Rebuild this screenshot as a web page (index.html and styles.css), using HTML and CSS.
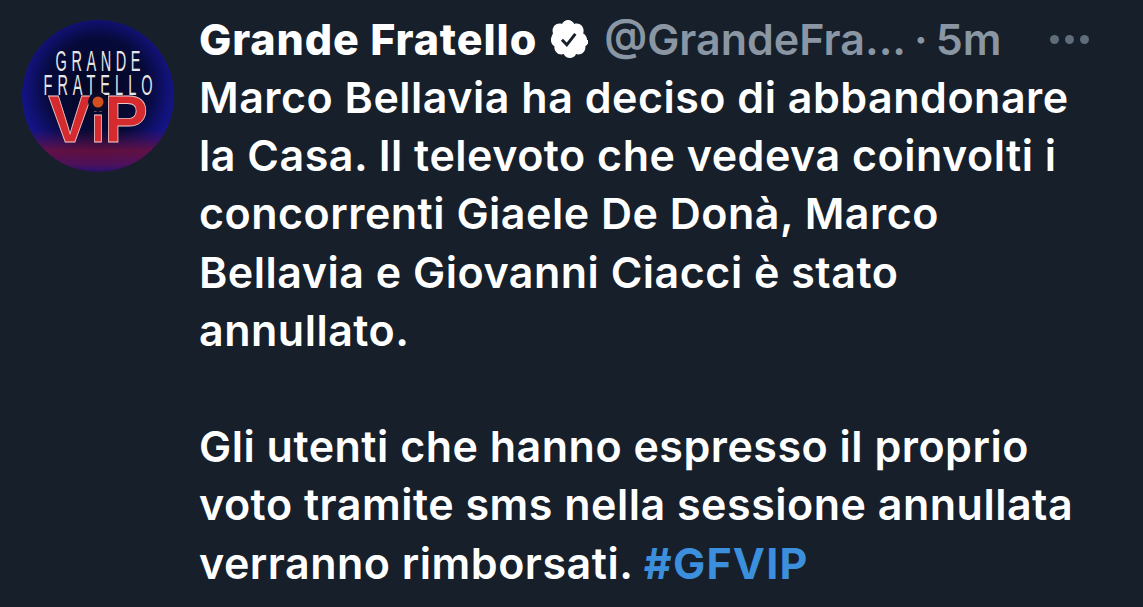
FILE: index.html
```html
<!DOCTYPE html>
<html lang="it">
<head>
<meta charset="utf-8">
<title>Grande Fratello</title>
<link rel="stylesheet" href="styles.css">
</head>
<body>
<article class="tweet">
  <div class="avatar">
    <svg viewBox="0 0 154 154" width="154" height="154">
      <defs>
        <radialGradient id="ball" cx="50%" cy="45%" r="55%">
          <stop offset="0" stop-color="#04061f"/>
          <stop offset="0.6" stop-color="#060a3a"/>
          <stop offset="0.86" stop-color="#12127a"/>
          <stop offset="0.97" stop-color="#15158c"/>
          <stop offset="1" stop-color="#14124f"/>
        </radialGradient>
        <linearGradient id="glow" x1="0" y1="0" x2="0" y2="1">
          <stop offset="0.72" stop-color="#5a0f40" stop-opacity="0"/>
          <stop offset="0.86" stop-color="#6e1038" stop-opacity="0.85"/>
          <stop offset="0.95" stop-color="#5c1050" stop-opacity="0.8"/>
          <stop offset="1" stop-color="#381060" stop-opacity="0.6"/>
        </linearGradient>
      </defs>
      <circle cx="76" cy="76" r="76" fill="url(#ball)"/>
      <circle cx="76" cy="76" r="76" fill="url(#glow)"/>
      <g transform="translate(76 0) scale(.5 1)">
        <text class="logo-line" x="0" y="51" textLength="170" lengthAdjust="spacing">GRANDE</text>
        <text class="logo-line" x="0" y="75" textLength="218" lengthAdjust="spacing">FRATELLO</text>
      </g>
      <text class="logo-vip" x="76" y="122" textLength="100" lengthAdjust="spacing">V<tspan class="logo-i">i</tspan>P</text>
      <circle cx="76" cy="82" r="10" fill="#0a0a2a"/>
      <circle cx="76" cy="82" r="5.5" fill="#d2501e"/>
    </svg>
  </div>
  <div class="body">
    <header class="head">
      <span class="name">Grande Fratello</span>
      <svg class="badge" viewBox="2.5 1.5 20 21" width="38" height="38">
        <path fill="#fff" d="M22.5 12.5c0-1.58-.88-2.95-2.15-3.6.15-.44.23-.91.23-1.4 0-2.21-1.71-3.998-3.82-3.998-.47 0-.92.084-1.34.25C14.82 2.42 13.5 1.5 12 1.5s-2.82.92-3.42 2.25c-.42-.166-.87-.25-1.34-.25-2.11 0-3.82 1.79-3.82 4 0 .49.08.96.23 1.4C3.38 9.55 2.5 10.92 2.5 12.5c0 1.5.8 2.8 1.96 3.5-.02.17-.04.34-.04.5 0 2.21 1.71 4 3.82 4 .47 0 .92-.09 1.34-.25.62 1.33 1.93 2.25 3.42 2.25s2.8-.92 3.42-2.25c.42.16.87.25 1.34.25 2.11 0 3.82-1.79 3.82-4 0-.16-.02-.33-.04-.5 1.16-.7 1.96-2 1.96-3.5z"/>
        <path fill="none" stroke="#161f2a" stroke-width="1.6" d="M8.6 12.4l2.7 2.8 4.7-6"/>
      </svg>
      <span class="meta">@GrandeFra...</span>
      <span class="meta dot">·</span>
      <span class="meta">5m</span>
      <span class="more"><i></i><i></i><i></i></span>
    </header>
    <p class="text">Marco Bellavia ha deciso di abbandonare<br>la Casa. Il televoto che vedeva coinvolti i<br>concorrenti Giaele De Donà, Marco<br>Bellavia e Giovanni Ciacci è stato<br>annullato.<br><br>Gli utenti che hanno espresso il proprio<br>voto tramite sms nella sessione annullata<br>verranno rimborsati. <span class="tag">#GFVIP</span></p>
  </div>
</article>
</body>
</html>
```

FILE: styles.css
```css
* { box-sizing: border-box; }
html, body { margin: 0; height: 100%; }
body {
  background: #161f2a;
  overflow: hidden;
  font-family: "Inter", "Liberation Sans", sans-serif;
}
.tweet {
  display: flex;
  gap: 23px;
  padding: 19px 0 0 22px;
}
.avatar { flex: none; width: 154px; height: 154px; margin-top: 1px; }
.avatar svg { display: block; }
.logo-line {
  font-family: "Liberation Sans", sans-serif;
  font-size: 29px;
  fill: #e6e6e6;
  text-anchor: middle;
}
.logo-vip {
  font-family: "Liberation Sans", sans-serif;
  font-weight: 700;
  font-size: 66px;
  fill: #d62b2e;
  stroke: #eec4c4;
  stroke-width: 0.8;
  text-anchor: middle;
}
.logo-i { font-size: 50px; }
.body { flex: 1; min-width: 0; }
.head {
  display: flex;
  align-items: center;
  height: 40px;
  font-size: 43px;
}
.name { color: #fff; font-weight: 800; letter-spacing: 0.9px; }
.badge { margin: 0 16px 0 13px; flex: none; }
.meta { color: #8a96a3; font-weight: 600; }
.dot { margin: 0 8px; }
.more { display: flex; gap: 6px; margin-left: 48px; }
.more i { width: 9px; height: 9px; border-radius: 50%; background: #5f6c7a; }
.text {
  margin: 9px 0 0;
  color: #fff;
  font-size: 43px;
  font-weight: 600;
  letter-spacing: 0.5px;
  line-height: 58.2px;
}
.tag { color: #3c8fdc; font-weight: 700; letter-spacing: 1.2px; }
```
